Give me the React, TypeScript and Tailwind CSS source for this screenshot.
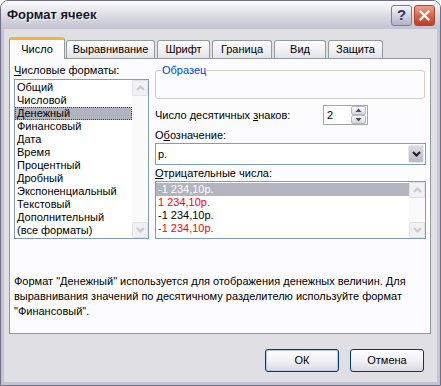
import React from 'react';

const formats = [
    'Общий',
    'Числовой',
    'Денежный',
    'Финансовый',
    'Дата',
    'Время',
    'Процентный',
    'Дробный',
    'Экспоненциальный',
    'Текстовый',
    'Дополнительный',
    '(все форматы)',
];

const negatives = [
    { text: '-1 234,10р.', red: false, selected: true },
    { text: '1 234,10р.', red: true, selected: false },
    { text: '-1 234,10р.', red: false, selected: false },
    { text: '-1 234,10р.', red: true, selected: false },
];

const tabs = [
    { label: 'Выравнивание', w: 'w-[89px]' },
    { label: 'Шрифт', w: 'w-[53px]' },
    { label: 'Граница', w: 'w-[60px]' },
    { label: 'Вид', w: 'w-[52px]' },
    { label: 'Защита', w: 'w-[55px]' },
];

function ScrollArrow({ dir }: { dir: 'up' | 'down' }) {
    return (
        <div className="h-[16px] w-[16px] rounded-[2px] border border-[#e2e2e7] bg-[#f1f1f3] flex items-center justify-center">
            <svg width="9" height="6" viewBox="0 0 9 6">
                <path
                    d={dir === 'up' ? 'M1 5 L4.5 1.5 L8 5' : 'M1 1 L4.5 4.5 L8 1'}
                    fill="none"
                    stroke="#c8c8d0"
                    strokeWidth="2"
                />
            </svg>
        </div>
    );
}

function VScroll() {
    return (
        <div className="w-[16px] h-full flex flex-col justify-between bg-[#fafafb]">
            <ScrollArrow dir="up" />
            <ScrollArrow dir="down" />
        </div>
    );
}

function SpinButton({ dir }: { dir: 'up' | 'down' }) {
    return (
        <div className="h-[9px] w-[15px] rounded-[2px] border border-[#b9b8c9] bg-gradient-to-b from-[#fbfbfd] to-[#d6d6e0] flex items-center justify-center">
            <svg width="7" height="5" viewBox="0 0 7 5">
                {dir === 'up' ? (
                    <path d="M0.5 4 L3.5 0.5 L6.5 4 Z" fill="#4a4a5a" />
                ) : (
                    <path d="M0.5 1 L3.5 4.5 L6.5 1 Z" fill="#4a4a5a" />
                )}
            </svg>
        </div>
    );
}

export default function App() {
    return (
        <div className="w-[441px] h-[386px] bg-white font-['Liberation_Sans',Arial,sans-serif] text-[11px] text-black">
            <div className="w-[441px] h-[386px] flex flex-col rounded-t-[8px] border border-[#6f6e86] overflow-hidden">
                {/* Title bar */}
                <div className="h-[28px] shrink-0 flex items-center justify-between pl-[6px] pr-[5px] bg-gradient-to-b from-[#fdfdfe] via-[#dcdce4] to-[#c3c2d1]">
                    <span className="text-[13px] font-bold text-[#15152a] [text-shadow:1px_1px_0_#ffffff]">Формат ячеек</span>
                    <div className="flex gap-[2px]">
                        <div className="w-[21px] h-[21px] rounded-[3px] border border-[#7d7c94] bg-gradient-to-b from-[#f6f6f9] to-[#b3b2c8] flex items-center justify-center text-[15px] font-bold text-[#35355a]">
                            ?
                        </div>
                        <div className="w-[21px] h-[21px] rounded-[3px] border border-[#a8482f] bg-gradient-to-b from-[#eda08d] via-[#d9674f] to-[#bf3a22] flex items-center justify-center">
                            <svg width="11" height="11" viewBox="0 0 11 11">
                                <path d="M1.5 1.5 L9.5 9.5 M9.5 1.5 L1.5 9.5" stroke="#ffffff" strokeWidth="2.2" strokeLinecap="square" />
                            </svg>
                        </div>
                    </div>
                </div>

                {/* Body */}
                <div className="flex-1 flex flex-col bg-[#e0dfe3] border-x-[3px] border-b-[3px] border-[#c4c3d4] pl-[5px] pr-[6px] pt-[8px]">
                    {/* Tabs */}
                    <div className="h-[21px] flex items-end">
                        <div className="relative z-10 w-[56px] h-[22px] -mb-px rounded-t-[3px] border-x border-[#919b9c] border-t-[3px] border-t-[#f3b33d] bg-[#fcfcfe] flex items-center justify-center">
                            Число
                        </div>
                        <div className="flex items-end gap-[2px] ml-px">
                            {tabs.map((t) => (
                                <div
                                    key={t.label}
                                    className={`${t.w} h-[18px] rounded-t-[3px] border-x border-t border-[#919b9c] bg-gradient-to-b from-white to-[#e4e3ea] flex items-center justify-center`}
                                >
                                    {t.label}
                                </div>
                            ))}
                        </div>
                    </div>

                    {/* Panel */}
                    <div className="h-[276px] border border-[#919b9c] bg-[#fcfcfe] px-[4px] pt-[5px] flex flex-col">
                        <div className="flex gap-[6px]">
                            {/* Left column */}
                            <div className="w-[135px] flex flex-col">
                                <div className="h-[13px] leading-[13px]">
                                    <u>Ч</u>исловые форматы:
                                </div>
                                <div className="mt-[2px] h-[160px] border border-[#7f9db9] bg-white flex">
                                    <div className="flex-1 py-px">
                                        {formats.map((f) =>
                                            f === 'Денежный' ? (
                                                <div key={f} className="h-[13px] leading-[11px] pl-px border border-dotted border-[#444] bg-[#b2b4bf]">
                                                    {f}
                                                </div>
                                            ) : (
                                                <div key={f} className="h-[13px] leading-[13px] pl-[2px]">
                                                    {f}
                                                </div>
                                            )
                                        )}
                                    </div>
                                    <VScroll />
                                </div>
                            </div>

                            {/* Right column */}
                            <div className="w-[271px] flex flex-col">
                                <fieldset className="h-[35px] w-[270px] border border-[#d0d0c8] rounded-[3px] px-[3px]">
                                    <legend className="px-px ml-[2px] leading-[13px] text-[#0046d5]">Образец</legend>
                                </fieldset>

                                <div className="mt-[6px] flex items-center h-[20px]">
                                    <div className="w-[168px]">
                                        Число десятичных <u>з</u>наков:
                                    </div>
                                    <div className="w-[45px] h-[20px] border border-[#a5a5ad] bg-white flex items-center justify-between pl-[3px] pr-px">
                                        <span>2</span>
                                        <div className="flex flex-col">
                                            <SpinButton dir="up" />
                                            <SpinButton dir="down" />
                                        </div>
                                    </div>
                                </div>

                                <div className="mt-[4px] h-[13px] leading-[13px]">
                                    О<u>б</u>означение:
                                </div>
                                <div className="mt-px h-[22px] border border-[#7f9db9] bg-white flex items-center justify-between pl-[2px] pr-px">
                                    <span>р.</span>
                                    <div className="w-[16px] h-[18px] rounded-[2px] border border-[#e8e8f0] bg-gradient-to-b from-[#dcdce6] to-[#b9b9cb] flex items-center justify-center">
                                        <svg width="9" height="6" viewBox="0 0 9 6">
                                            <path d="M1 1 L4.5 4.5 L8 1" fill="none" stroke="#1c1c2c" strokeWidth="2" />
                                        </svg>
                                    </div>
                                </div>

                                <div className="mt-[2px] h-[13px] leading-[13px]">
                                    <u>О</u>трицательные числа:
                                </div>
                                <div className="mt-px h-[58px] border border-[#7f9db9] bg-white flex">
                                    <div className="flex-1 py-px">
                                        {negatives.map((n, i) => (
                                            <div
                                                key={i}
                                                className={`h-[13px] leading-[13px] pl-[2px] ${n.selected ? 'bg-[#b2b4bf] text-white' : ''} ${n.red ? 'text-[#ff0000]' : ''}`}
                                            >
                                                {n.text}
                                            </div>
                                        ))}
                                    </div>
                                    <VScroll />
                                </div>
                            </div>
                        </div>

                        <p className="mt-[35px] leading-[15px]">
                            Формат "Денежный" используется для отображения денежных величин. Для
                            <br />
                            выравнивания значений по десятичному разделителю используйте формат
                            <br />
                            "Финансовый".
                        </p>
                    </div>

                    {/* Buttons */}
                    <div className="mt-[15px] flex justify-end gap-[11px] pr-[7px]">
                        <button className="w-[74px] h-[23px] rounded-[3px] border border-[#003c74] bg-gradient-to-b from-white via-[#f2f2f6] to-[#d8d8e2] shadow-[inset_0_0_0_1px_#b6c9ef]">
                            ОК
                        </button>
                        <button className="w-[74px] h-[23px] rounded-[3px] border border-[#003c74] bg-gradient-to-b from-white via-[#f2f2f6] to-[#d8d8e2]">
                            Отмена
                        </button>
                    </div>
                </div>
            </div>
        </div>
    );
}
